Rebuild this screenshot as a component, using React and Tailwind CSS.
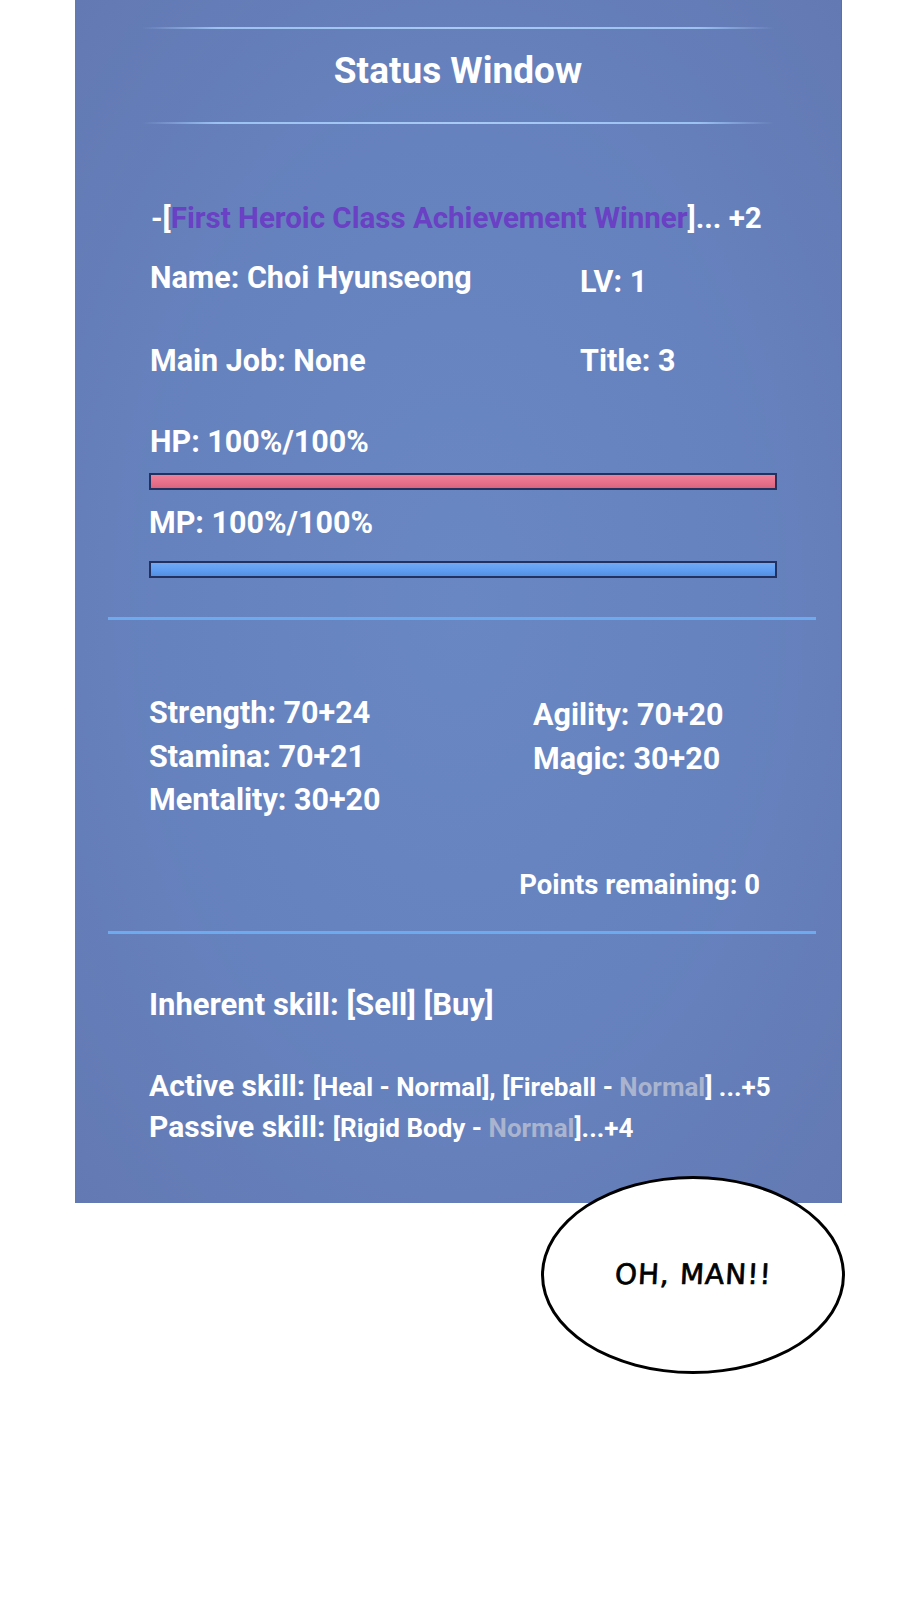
import React from "react";

/* status sheet data */
const STATS_LEFT = ["Strength: 70+24", "Stamina: 70+21", "Mentality: 30+20"];
const STATS_RIGHT = ["Agility: 70+20", "Magic: 30+20"];

function GlowLine({ className = "" }) {
  return (
    <div
      className={`mx-auto w-[632px] h-[2px] bg-[linear-gradient(90deg,transparent_0%,#9cc2f2_12%,#a8caf4_50%,#9cc2f2_88%,transparent_100%)] ${className}`}
    />
  );
}

function Bar({ fill, className = "" }) {
  return (
    <div
      className={`ml-[74px] w-[628px] h-[17px] border-2 border-[#22315d] ${fill} ${className}`}
    />
  );
}

export default function App() {
  return (
    <div className="w-[918px] min-h-[1600px] bg-white font-['Roboto',sans-serif] text-white">
      {/* status window panel */}
      <div className="ml-[75px] w-[767px] h-[1203px] bg-[radial-gradient(ellipse_at_center,#6987c3_0%,#6682be_55%,#6379b3_100%)] border-r border-[#5b70a8] pt-[27px]">
        <GlowLine />
        <h1 className="mt-[22px] h-[40px] leading-[40px] text-center text-[37px] font-bold">
          Status Window
        </h1>
        <GlowLine className="mt-[31px]" />

        <p className="mt-[76px] ml-[76px] leading-[36px] text-[29.5px] font-bold">
          -[<span className="text-[#6a40c4]">First Heroic Class Achievement Winner</span>]... +2
        </p>

        <div className="mt-[24px] ml-[75px] grid grid-cols-[430px_1fr] text-[30.5px] font-bold">
          <p className="leading-[36px]">Name: Choi Hyunseong</p>
          <p className="leading-[36px] pt-[4px]">LV: 1</p>
          <p className="mt-[43px] leading-[36px]">Main Job: None</p>
          <p className="mt-[43px] leading-[36px]">Title: 3</p>
        </div>

        <p className="mt-[45px] ml-[75px] leading-[36px] text-[30.5px] font-bold">
          HP: 100%/100%
        </p>
        <Bar className="mt-[13px]" fill="bg-[linear-gradient(180deg,#ee8098_0%,#e76f8a_60%,#d9647e_100%)]" />
        <p className="mt-[15px] ml-[74px] leading-[36px] text-[30.5px] font-bold">
          MP: 100%/100%
        </p>
        <Bar className="mt-[20px]" fill="bg-[linear-gradient(180deg,#72aaf4_0%,#5d9cf0_60%,#548fe0_100%)]" />

        <div className="mt-[39px] ml-[33px] w-[708px] h-[3px] bg-[#6eaaee]" />

        {/* attributes */}
        <div className="mt-[71px] ml-[74px] grid grid-cols-[384px_1fr] text-[30.5px] font-bold leading-[43.5px]">
          <div>
            {STATS_LEFT.map((s) => (
              <p key={s}>{s}</p>
            ))}
          </div>
          <div className="pt-[2px]">
            {STATS_RIGHT.map((s) => (
              <p key={s}>{s}</p>
            ))}
          </div>
        </div>

        <p className="mt-[45px] mr-[81px] text-right leading-[36px] text-[27.5px] font-bold">
          Points remaining: 0
        </p>

        <div className="mt-[28px] ml-[33px] w-[708px] h-[3px] bg-[#6eaaee]" />

        {/* skills */}
        <p className="mt-[53px] ml-[74px] leading-[36px] text-[31px] font-bold">
          Inherent skill: [Sell] [Buy]
        </p>
        <div className="mt-[43px] ml-[74px] font-bold leading-[39px]">
          <p className="text-[30px]">
            Active skill:{" "}
            <span className="text-[26px]">
              [Heal - Normal], [Fireball - <span className="text-[#aab4cf]">Normal</span>] ...+5
            </span>
          </p>
          <p className="text-[30px]">
            Passive skill:{" "}
            <span className="text-[26px]">
              [Rigid Body - <span className="text-[#aab4cf]">Normal</span>]...+4
            </span>
          </p>
        </div>
      </div>

      {/* speech bubble overlapping the panel edge */}
      <div className="relative -mt-[27px] ml-[541px] w-[304px] h-[198px] rounded-[50%] border-[3px] border-black bg-white flex items-center justify-center">
        <span className="font-['DejaVu_Sans',sans-serif] text-[28px] font-medium text-black tracking-[1px] -skew-x-3 [-webkit-text-stroke:0.7px_black]">
          OH, MAN!!
        </span>
      </div>
    </div>
  );
}
